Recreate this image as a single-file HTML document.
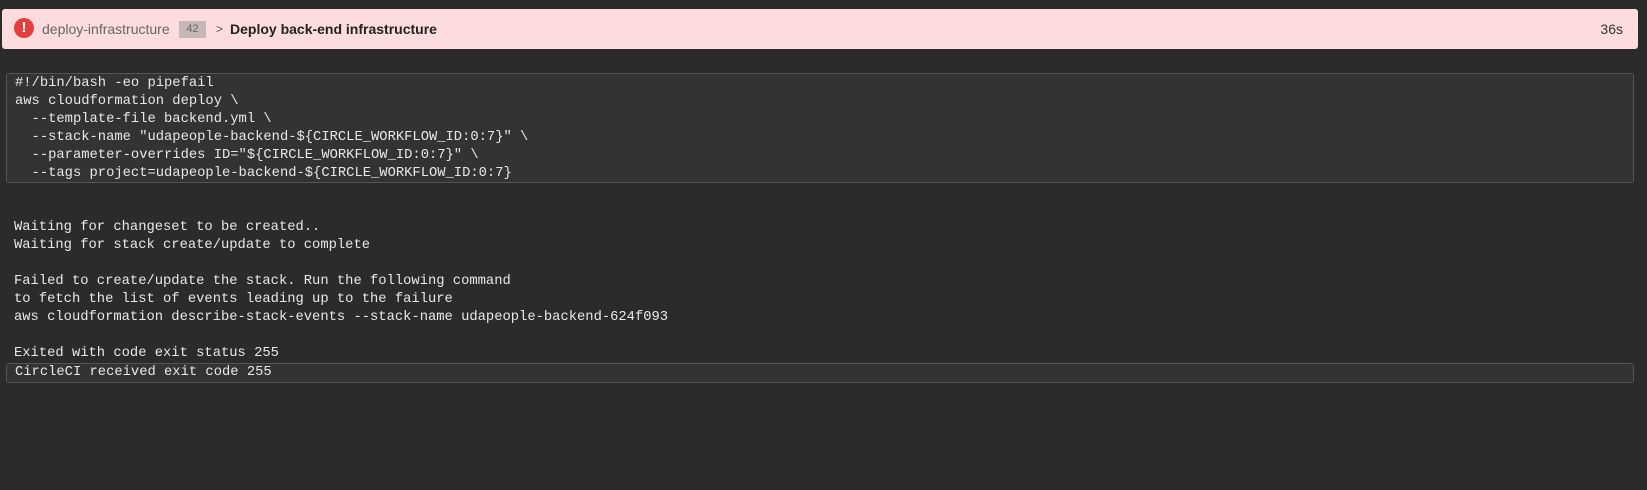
<!DOCTYPE html>
<html><head><style>
body{margin:0;width:1647px;height:490px;background:#2b2b2b;overflow:hidden;font-family:"Liberation Sans",sans-serif;position:relative}
.hdr{position:absolute;left:2px;top:9px;width:1636px;height:40px;background:#fcdcdc;border-radius:3px}
.ic{position:absolute;left:12px;top:9px;width:20px;height:20px;border-radius:50%;background:#e53e3e;color:#fff;font-weight:bold;font-size:15px;text-align:center;line-height:20px}
.t{position:absolute;top:11px;font-size:14px;line-height:18px}
.badge{position:absolute;left:177px;top:12px;width:27px;height:17px;background:#c4b8b8;color:#666;font-size:11px;text-align:center;line-height:17px}
.mono{font-family:"Liberation Mono",monospace;font-size:13.8px;line-height:18px;color:#e8e8e8;white-space:pre;position:absolute}
.box{position:absolute;border:1px solid #555;background:#333;border-radius:3px}
</style></head><body>
<div class="hdr">
<div class="ic">!</div>
<div class="t" style="left:40px;color:#666">deploy-infrastructure</div>
<div class="badge">42</div>
<div class="t" style="left:214px;color:#555;font-size:12px">&gt;</div>
<div class="t" style="left:228px;color:#222;font-weight:bold">Deploy back-end infrastructure</div>
<div class="t" style="right:15px;color:#333">36s</div>
</div>
<div class="box" style="left:6px;top:73px;width:1626px;height:108px"></div>
<div class="mono" style="left:15px;top:75px">#!/bin/bash -eo pipefail
aws cloudformation deploy \
  --template-file backend.yml \
  --stack-name "udapeople-backend-${CIRCLE_WORKFLOW_ID:0:7}" \
  --parameter-overrides ID="${CIRCLE_WORKFLOW_ID:0:7}" \
  --tags project=udapeople-backend-${CIRCLE_WORKFLOW_ID:0:7}</div>
<div class="mono" style="left:14px;top:219px">Waiting for changeset to be created..
Waiting for stack create/update to complete

Failed to create/update the stack. Run the following command
to fetch the list of events leading up to the failure
aws cloudformation describe-stack-events --stack-name udapeople-backend-624f093

Exited with code exit status 255</div>
<div class="box" style="left:6px;top:363px;width:1626px;height:18px"></div>
<div class="mono" style="left:15px;top:364px">CircleCI received exit code 255</div>
</body></html>
